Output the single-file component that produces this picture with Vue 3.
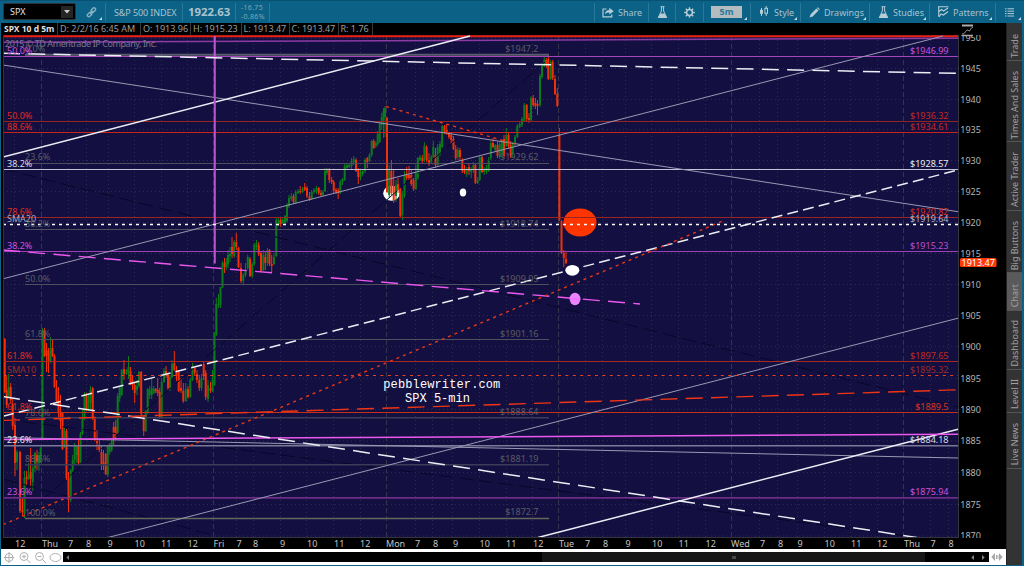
<template>
  <div class="app-window">
    <header class="toolbar">
      <div class="toolbar__symbol">
        <span>SPX</span>
        <span class="toolbar__arrow"><svg width="6" height="4" viewBox="0 0 6 4"><path d="M0 0h6L3 3.6z" fill="#ccc" /></svg></span>
      </div>
      <div class="toolbar__cell toolbar__cell--link toolbar__cell--menu">
        <svg width="11" height="11" viewBox="0 0 11 11" fill="none" stroke="#86b0c2" stroke-width="1.4">
          <rect x="4.7" y="1.6" width="5.2" height="3" rx="1.5" transform="rotate(-45 7.3 3.1)" />
          <rect x="1" y="6" width="5.2" height="3" rx="1.5" transform="rotate(-45 3.6 7.5)" />
          <path d="M4 7l3.2-3.2" />
        </svg>
      </div>
      <div class="toolbar__cell toolbar__cell--name"><span>S&amp;P 500 INDEX</span></div>
      <div class="toolbar__cell toolbar__cell--last"><span>1922.63</span></div>
      <div class="toolbar__cell toolbar__cell--change">
        <span>-16.75</span>
        <span>-0.86%</span>
      </div>
      <div class="toolbar__spacer" />
      <div class="toolbar__cell toolbar__cell--share">
        <svg width="12" height="11" viewBox="0 0 12 11">
          <path d="M4.5 2H1v7.8h8.8V7.5" fill="none" stroke="#b5cdd7" stroke-width="1.2" />
          <path d="M3 7.3C3.2 4.3 4.8 3 7.3 3V.8L11.7 4.3 7.3 7.6V5.4C5.4 5.3 4 5.9 3 7.3z" fill="#b5cdd7" />
        </svg>
        <span>Share</span>
      </div>
      <div class="toolbar__cell toolbar__cell--flask">
        <svg width="11" height="13" viewBox="0 0 11 13"><path :d="flaskOutline" class="flask" /><path :d="flaskFill" fill="#b5cdd7" /></svg>
      </div>
      <div class="toolbar__cell toolbar__cell--gear">
        <svg width="11" height="11" viewBox="-5.5 -5.5 11 11" fill="none" stroke="#b5cdd7">
          <circle r="2.9" stroke-width="1.5" />
          <path d="M0-5.3v2M0 5.3v-2M-5.3 0h2M5.3 0h-2M-3.7-3.7l1.3 1.3M3.7 3.7L2.4 2.4M-3.7 3.7l1.3-1.3M3.7-3.7L2.4-2.4" stroke-width="1.4" />
        </svg>
      </div>
      <div class="toolbar__cell toolbar__cell--interval toolbar__cell--menu"><b>5m</b></div>
      <div class="toolbar__cell toolbar__cell--style toolbar__cell--menu">
        <svg width="10" height="12" viewBox="0 0 10 12" stroke="#b5cdd7">
          <path d="M2.5 2v8" /><rect x="1" y="3.8" width="3" height="4" fill="#b5cdd7" stroke="none" />
          <path d="M7.2 0v2.5M7.2 7.5V10" /><rect x="5.9" y="2.3" width="2.6" height="5" fill="none" />
        </svg>
        <span>Style</span>
      </div>
      <div class="toolbar__cell toolbar__cell--drawings toolbar__cell--menu">
        <svg width="11" height="11" viewBox="0 0 11 11"><path d="M.6 10.4l.9-3L7.4 1.5l2.1 2.1-5.9 5.9zM8 .9l.8-.7L10.8 2.200l-.8.8z" fill="#b5cdd7" /></svg>
        <span>Drawings</span>
      </div>
      <div class="toolbar__cell toolbar__cell--studies toolbar__cell--menu">
        <svg width="11" height="13" viewBox="0 0 11 13"><path :d="flaskOutline" class="flask" /><path :d="flaskFill" fill="#b5cdd7" /></svg>
        <span>Studies</span>
      </div>
      <div class="toolbar__cell toolbar__cell--patterns toolbar__cell--menu">
        <svg width="11" height="12" viewBox="0 0 11 12" fill="none" stroke="#b5cdd7" stroke-width="1.1">
          <path d="M0 .8h10.500M.7 1v9.500M1 5.500l2.500-2 2 1.500 4.500-3M1 11l2-3 2.500 1L10 5.500" />
        </svg>
        <span>Patterns</span>
      </div>
      <div class="toolbar__cell toolbar__cell--list toolbar__cell--menu">
        <svg width="9" height="9" viewBox="0 0 9 9" stroke="#b5cdd7"><path d="M0 .8h1.500M2.500.8H9M0 3.200h1.500M2.500 3.200H9M0 5.600h1.500M2.500 5.600H9M0 8h1.500M2.500 8H9" /></svg>
      </div>
    </header>

    <div class="workspace">
      <main class="panel">
        <div class="quote">
          <b class="quote__cell quote__cell--symbol">SPX 10 d 5m</b>
          <span v-for="q in quote" :key="q.text" class="quote__cell" :style="{ width: q.width + 'px' }">{{ q.text }}</span>
        </div>

        <svg class="chart" width="1003" height="514" viewBox="3 35 1003 514">
          <defs>
            <clipPath id="plot"><rect x="3" y="35" width="955.5" height="503" /></clipPath>
            <clipPath id="axis"><rect x="958" y="23" width="48" height="515" /></clipPath>
          </defs>
          <rect x="3" y="35" width="955.5" height="503" fill="#131041" />
          <g clip-path="url(#plot)">
            <!-- grid -->
            <path v-for="p in prices" :key="'h' + p.y" :d="`M3 ${p.y}H958`" class="grid" />
            <path v-for="x in hourLines" :key="'v' + x" :d="`M${x} 36V538`" class="grid" />
            <path v-for="x in dayLines" :key="'d' + x" :d="`M${x} 36V538`" class="grid grid--day" />

            <ellipse cx="391.500" cy="193.200" rx="8.300" ry="7.500" fill="#fff" />
            <ellipse cx="580" cy="222.500" rx="16.500" ry="14" fill="#ff3500" />

            <!-- candles -->
            <g v-for="(c, i) in candles" :key="'c' + i" :fill="c.up ? '#0a7a1c' : '#f03008'">
              <rect :x="c.x - 0.5" :y="c.high" width="1" :height="c.low - c.high" />
              <rect :x="c.x - 1" :y="c.top" width="2" :height="c.height" />
            </g>

            <!-- studies and trend lines -->
            <line
              v-for="(l, i) in lines"
              :key="'l' + i"
              :x1="l[0]"
              :y1="l[1]"
              :x2="l[2]"
              :y2="l[3]"
              :stroke="l[4]"
              :stroke-width="l[5]"
              :stroke-dasharray="l[6]"
            />

            <ellipse cx="463" cy="192.500" rx="3.200" ry="4" fill="#fff" />
            <ellipse cx="572.300" cy="270.300" rx="7" ry="5.400" fill="#fff" />
            <ellipse cx="575" cy="299" rx="5.400" ry="6.200" fill="#ea84ff" />
            <path d="M569.600 298.600l11 .8" stroke="#ff60ff" />

            <text x="5" y="47" class="label" fill="#77758c" textLength="152">2015 © TD Ameritrade IP Company, Inc.</text>
            <text v-for="(t, i) in leftLabels" :key="'a' + i" :x="t[0]" :y="t[1]" class="label" :fill="t[2]">{{ t[3] }}</text>
            <text v-for="(t, i) in rightLabels" :key="'b' + i" :x="t[0]" :y="t[1]" class="label" :fill="t[2]" text-anchor="end">{{ t[3] }}</text>
            <text x="441.800" y="388" class="signature" textLength="117">pebblewriter.com</text>
            <text x="437.500" y="402" class="signature" textLength="65">SPX 5-min</text>
          </g>

          <path d="M3.500 35V537.500H958.500V35" fill="none" stroke="#34343c" />

          <!-- price axis -->
          <g clip-path="url(#axis)">
            <g v-for="p in prices" :key="'p' + p.y">
              <path :d="`M956 ${p.y}h3`" stroke="#555" />
              <text x="960.300" :y="p.y + 3" class="label" fill="#b4b4b4">{{ p.value }}</text>
            </g>
            <rect x="960" y="258" width="36.500" height="9" rx="1.500" fill="#ff3a08" />
            <text x="961.500" y="265.600" class="label" fill="#fff">1913.47</text>
          </g>

          <!-- time axis -->
          <text v-for="(t, i) in times" :key="'t' + i" :x="t[0]" y="547" class="label" fill="#c4c4c4">{{ t[1] }}</text>
        </svg>
        <svg class="scale-icon" width="13" height="13" viewBox="0 0 13 13" fill="none" stroke="#aaa">
          <path d="M1 1.500h11" stroke-width="2" />
          <path d="M1 11.500h11" stroke-width="1.500" />
          <path d="M1 9.500C3 11 4 8 5.500 6.500S8 8 9 6.500 10 3.500 12 3" />
        </svg>

        <footer class="scroller">
          <svg width="60" height="15" viewBox="0 0 60 15" fill="none" stroke="#b0b0b0">
            <circle cx="6" cy="7.500" r="4" /><path d="M6 2v11M.8 7.500h10.400" />
            <circle cx="21" cy="6.500" r="4" /><path d="M19 6.500h4M21 4.500v4M24 9.500l3.500 3.500" />
            <circle cx="36.500" cy="6.500" r="4" /><path d="M34.500 6.500h4M39.500 9.500l3.500 3.500" />
            <ellipse cx="52.500" cy="7.500" rx="5.500" ry="4" />
          </svg>
          <div class="scroller__track">
            <svg width="3" height="5" viewBox="0 0 3 5"><path d="M3 0v5L.3 2.500z" fill="#777" /></svg>
            <div class="scroller__thumb"><i /></div>
            <svg width="14" height="5" viewBox="0 0 14 5"><path d="M3 0v5L.3 2.500zM11 0v5l2.700-2.500z" fill="#888" /></svg>
          </div>
          <svg width="12" height="8" viewBox="0 0 12 8" fill="#a8a8a8"><path d="M4 0v8L.3 4zM8 0v8l3.700-4zM5 2h1v4H5zM6.500 2h1v4h-1z" /></svg>
        </footer>
      </main>

      <nav class="sidebar">
        <div
          v-for="tab in tabs"
          :key="tab.label"
          class="sidebar__tab"
          :class="{ 'sidebar__tab--active': tab.label === 'Chart' }"
          :style="{ height: tab.height + 'px' }"
        >
          <span>{{ tab.label }}</span>
        </div>
      </nav>
    </div>
  </div>
</template>

<script setup>
const flaskOutline = 'M3.500.7h4M4.400 1v4L1.300 11.500h8.400L6.600 5V1'
const flaskFill = 'M3.500 7.500h4L10 12H1z'

const quote = [
  { text: 'D: 2/2/16 6:45 AM', width: 83 },
  { text: 'O: 1913.96', width: 50 },
  { text: 'H: 1915.23', width: 50.5 },
  { text: 'L: 1913.47', width: 48 },
  { text: 'C: 1913.47', width: 49 },
  { text: 'R: 1.76', width: 34 },
]

const tabs = [
  { label: 'Trade', height: 38 },
  { label: 'Times And Sales', height: 81 },
  { label: 'Active Trader', height: 69 },
  { label: 'Big Buttons', height: 62 },
  { label: 'Chart', height: 37.5 },
  { label: 'Dashboard', height: 59 },
  { label: 'Level II', height: 43 },
  { label: 'Live News', height: 56 },
]

const priceRows = [38, 68.5, 99.5, 129.5, 160.5, 191.5, 222.5, 253.500, 284.500, 315.500, 346.500, 378.500, 409.500, 441, 472.500, 504.500, 536]
const prices = priceRows.map((y, i) => ({ y, value: 1950 - i * 5 }))

const dayLines = [41.5, 213.5, 386.5, 558.5, 731.5, 903.5]
const hourLines = [
  14.5, 68.5, 86.5, 108.5, 134.5, 161.5, 187.5, 236.5, 253.5, 280.5, 306.5, 333.5, 360.5,
  415.5, 432.5, 452.5, 479.5, 506.5, 532.5, 585.5, 602.5, 625.5, 651.5, 678.5, 705.5,
  759.5, 777.5, 797.5, 824.5, 850.5, 877.5, 930.5, 948.5,
]

const times = [
  [15, '12'], [42, 'Thu'], [68, '7'], [86, '8'], [107.5, '9'], [134.5, '10'], [161, '11'], [187.5, '12'],
  [213.5, 'Fri'], [236.5, '7'], [253, '8'], [280, '9'], [307, '10'], [334, '11'], [360, '12'],
  [386, 'Mon'], [415, '7'], [433, '8'], [453, '9'], [479.5, '10'], [506, '11'], [533, '12'],
  [559, 'Tue'], [585, '7'], [603, '8'], [625.5, '9'], [652, '10'], [678.5, '11'], [705.5, '12'],
  [731, 'Wed'], [760, '7'], [778, '8'], [797.5, '9'], [824.5, '10'], [851, '11'], [877, '12'],
  [904, 'Thu'], [930.5, '7'], [948.5, '8'],
]

const red = '#c8241c'
const white = '#ededf5'
const thin = '#9a98b4'
const grey = '#4e4e5e'
const violet = '#a845bc'
const bright = '#ec58ee'
const navy = '#07062a'

// x1, y1, x2, y2, colour, width, dashes
const lines = [
  [25, 515, 545, 62, navy, 1, '14 6'],
  [3, 169, 958, 407, navy, 1, '14 6'],
  [3, 479, 213, 535, navy, 1, '14 6'],
  [3, 419, 915, 537, navy, 1, '14 6'],
  [25, 54.8, 549, 54.8, '#5c5b6c', 2],
  [25, 163.5, 549, 163.5, grey, 1],
  [25, 229.5, 549, 229.5, grey, 1],
  [25, 284.5, 549, 284.5, grey, 1],
  [25, 339.5, 549, 339.5, grey, 1],
  [25, 417.7, 549, 417.7, '#3c3b58', 1.6],
  [25, 464.8, 549, 464.8, '#3c3b58', 1.6],
  [25, 518.5, 549, 518.5, '#66665c', 1.4],
  [3, 36.2, 958, 36.2, '#e8200c', 2],
  [3, 42.3, 958, 38.3, '#8c3aa4', 1.5],
  [3, 56.5, 958, 56.5, violet, 1],
  [3, 121.5, 958, 121.5, '#94241f', 1],
  [3, 132.5, 958, 132.5, red, 1],
  [3, 169.5, 958, 169.5, '#c4c2d4', 1],
  [3, 217.5, 958, 217.5, '#9c2420', 1],
  [3, 251.5, 958, 251.5, '#9c40b4', 1],
  [3, 361.5, 958, 361.5, '#a62820', 1],
  [3, 412.5, 958, 412.5, '#c43018', 1],
  [3, 445.8, 958, 445.8, '#7b7999', 1.6],
  [3, 497.8, 958, 497.8, '#6a2c86', 1.8],
  [3, 437.5, 958, 458, thin, 1],
  [3, 65, 958, 211.7, thin, 1],
  [3, 278.8, 943, 36, thin, 1],
  [108, 537.5, 958, 318.2, thin, 1],
  [3, 157, 470, 36, white, 1.5],
  [538, 537.5, 958, 429.3, white, 1.5],
  [3, 439.4, 958, 434.2, bright, 1.5],
  [214.8, 36, 214.8, 263.5, '#bb54cc', 2],
  [3, 53.3, 958, 73.4, white, 1.5, '17 8.3'],
  [3, 416.3, 958, 170, white, 1.5, '11 5.2'],
  [3, 396.6, 920, 538, white, 1.5, '17 8.3'],
  [3, 420.4, 958, 389.8, '#f03414', 1.4, '17 8.3'],
  [3, 250, 640, 304, bright, 1.4, '17 8.3'],
  [3, 524.5, 725, 220, '#e83818', 1.4, '3 4'],
  [386, 106.5, 515, 144, '#e83818', 1.4, '3 4'],
  [3, 375.5, 958, 375.5, '#e84020', 1, '3 4.4'],
  [3, 224.500, 958, 224.500, '#fff', 1.4, '3 4'],
]

const leftLabels = [
  [25, 51.5, '#5c5b66', '0.0%'],
  [7, 53.5, '#d050dc', '50.0%'],
  [7, 119, '#e02c1c', '50.0%'],
  [7, 130, '#e02c1c', '88.6%'],
  [25, 160.3, '#5c5b66', '23.6%'],
  [7, 166.500, '#dcdce8', '38.2%'],
  [7, 214.500, '#e02c1c', '78.6%'],
  [7, 221.500, '#a8a8bc', 'SMA20'],
  [25, 227.300, '#5c5b66', '38.2%'],
  [7, 249, '#d050dc', '38.2%'],
  [25, 282, '#5c5b66', '50.0%'],
  [25, 337, '#5c5b66', '61.8%'],
  [7, 359, '#e02c1c', '61.8%'],
  [7, 373, '#9c2a28', 'SMA10'],
  [7, 410, '#e02c1c', '61.8%'],
  [25, 415.500, '#5c5b66', '78.6%'],
  [7, 443.300, '#e4e4ec', '23.6%'],
  [25, 462.300, '#5c5b66', '88.6%'],
  [7, 495.300, '#d050dc', '23.6%'],
  [25, 515.500, '#5c5b66', '100.0%'],
]

const rightLabels = [
  [538.5, 52, '#5c5b66', '$1947.2'],
  [538.5, 160.300, '#5c5b66', '$1929.62'],
  [538.5, 227.300, '#5c5b66', '$1918.74'],
  [538.5, 282, '#5c5b66', '$1909.95'],
  [538.5, 337, '#5c5b66', '$1901.16'],
  [538.5, 415.300, '#5c5b66', '$1888.64'],
  [538.5, 462.300, '#5c5b66', '$1881.19'],
  [538.5, 515.300, '#5c5b66', '$1872.7'],
  [948.5, 53.500, '#d050dc', '$1946.99'],
  [948.5, 119, '#c8281c', '$1936.32'],
  [948.5, 130, '#c8281c', '$1934.61'],
  [948.5, 166.500, '#ececf4', '$1928.57'],
  [948.5, 214.500, '#d82c1c', '$1920.82'],
  [948.5, 221.500, '#b4b4c4', '$1919.64'],
  [948.5, 249, '#c04ccc', '$1915.23'],
  [948.5, 359, '#c8281c', '$1897.65'],
  [948.5, 373, '#9c2a28', '$1895.32'],
  [948.5, 409.800, '#dc341c', '$1889.5'],
  [948.5, 443.300, '#dcdce8', '$1884.18'],
  [948.5, 495.300, '#d050dc', '$1875.94'],
]

// x, high, open, close, low
const bars = [
  [4.7, 338, 339, 392, 393], [6.7, 375, 390, 405, 408], [8.7, 374, 396, 387, 398], [10.7, 383, 387, 400, 403], [12.7, 399, 404, 426, 430],
  [15, 418, 425, 463, 476], [17, 450, 462, 452, 470], [20, 451, 452, 511, 513], [22.5, 498, 510, 512, 516], [24.5, 471, 514, 478, 518],
  [26.6, 471, 477, 479, 485], [28.6, 463, 478, 475, 480], [30.6, 448, 472, 479, 487], [32.8, 466, 482, 468, 491], [35, 452, 468, 453, 472],
  [37, 450, 455, 462, 470], [39, 452, 463, 455, 471], [40.7, 447, 462, 448, 463], [42.5, 328, 438, 331, 438], [44.5, 328, 330, 356, 357],
  [46.5, 343, 350, 356, 372], [48.5, 348, 351, 361, 373], [50.500, 337, 361, 348, 363], [52.5, 339, 348, 356, 357], [54.5, 354, 356, 387, 388],
  [56.5, 380, 388, 401, 402], [58.5, 387, 400, 412, 417], [60.5, 395, 412, 421, 429], [62.5, 412, 413, 449, 450], [64.5, 428, 443, 431, 448],
  [66.5, 429, 431, 478, 480], [68.5, 472, 478, 500, 512], [70.700, 469, 500, 470, 502], [72.700, 455, 470, 460, 472], [74.700, 443, 460, 446, 465],
  [76.700, 446, 455, 447, 463], [78.500, 440, 446, 463, 464], [80.500, 432, 462, 434, 463], [82.500, 410, 434, 419, 435], [84.500, 392, 419, 394, 420],
  [86.500, 393, 396, 409, 411], [88.500, 395, 410, 396, 411], [90.500, 386, 403, 390, 409], [92.700, 387, 388, 419, 420], [94.700, 418, 419, 440, 441],
  [97, 430, 441, 443, 450], [99.300, 440, 445, 450, 452], [101.500, 445, 452, 465, 470], [103.500, 450, 462, 464, 470], [105.700, 453, 454, 474, 475],
  [107.700, 445, 475, 446, 477], [109.700, 443, 452, 445, 455], [111.700, 438, 450, 440, 452], [113.700, 422, 427, 438, 445], [115.700, 420, 427, 434, 440],
  [117.700, 393, 433, 396, 435], [119.700, 386, 398, 388, 402], [121.700, 369, 395, 370, 396], [124, 360, 369, 374, 380], [126.500, 369, 374, 370, 375],
  [128.500, 356, 372, 367, 379], [130.500, 367, 371, 384, 385], [132.500, 375, 380, 385, 390], [134.700, 382, 385, 393, 403], [137, 380, 390, 386, 395],
  [139, 371, 386, 372, 388], [141.200, 371, 372, 415, 416], [143.700, 416, 417, 431, 436], [145.700, 410, 431, 411, 432], [147.700, 388, 412, 389, 414],
  [149.700, 386, 395, 390, 399], [151.700, 378, 395, 388, 399], [153.700, 386, 393, 389, 394], [155.700, 388, 389, 391, 393], [157.700, 378, 390, 393, 396],
  [159.700, 388, 392, 418, 419], [161.700, 378, 418, 382, 419], [164, 368, 382, 371, 383], [166, 366, 371, 375, 378], [168, 374, 375, 388, 390],
  [170, 375, 388, 377, 391], [172, 360, 377, 364, 378], [174.300, 351, 363, 370, 371], [176.500, 366, 370, 376, 381], [178.700, 371, 372, 391, 392],
  [181, 378, 388, 391, 393], [183.300, 383, 391, 401, 403], [185.700, 383, 401, 389, 402], [188, 386, 389, 397, 399], [190.300, 378, 397, 380, 398],
  [192.500, 363, 380, 367, 381], [194.700, 367, 368, 373, 376], [197, 370, 374, 380, 383], [199.300, 375, 380, 388, 391], [201.500, 374, 388, 378, 391],
  [203.700, 362, 364, 376, 380], [205.700, 370, 373, 397, 400], [208, 380, 399, 385, 402], [210.500, 382, 388, 391, 393], [212.500, 370, 390, 380, 392],
  [214.500, 332, 385, 335, 386], [216.300, 298, 335, 304, 336], [218.500, 294, 305, 304, 308], [220.500, 287, 305, 287, 308], [222.500, 261, 287, 263, 288],
  [224.500, 258, 263, 267, 273], [226.300, 258, 267, 262, 270], [228, 250, 264, 255, 268], [230, 247, 256, 254, 262], [232, 237, 247, 254, 258],
  [234.200, 240, 256, 242, 258], [236.300, 233, 242, 247, 250], [238.500, 247, 248, 267, 268], [241, 263, 268, 281, 283], [243.300, 273, 281, 275, 285],
  [245.500, 263, 275, 270, 277], [247.700, 255, 268, 257, 270], [250, 257, 259, 276, 277], [252.200, 262, 276, 264, 278], [254.300, 243, 264, 245, 266],
  [256.500, 240, 247, 243, 250], [258.700, 242, 245, 254, 256], [261, 252, 253, 271, 272], [263.300, 250, 270, 255, 271], [265.300, 252, 257, 263, 270],
  [267.500, 248, 263, 250, 266], [269.500, 249, 250, 264, 266], [271.700, 255, 264, 266, 272], [274, 253, 264, 257, 265], [276.300, 217, 256, 220, 257],
  [278.700, 218, 224, 220, 226], [280.700, 218, 220, 224, 227], [282.800, 218, 223, 220, 224], [285, 215, 223, 216, 224], [287, 203, 221, 206, 222],
  [289, 195, 206, 198, 208], [291.300, 193, 199, 196, 201], [293.500, 194, 196, 202, 204], [295.700, 190, 203, 192, 204], [298, 189, 193, 191, 194],
  [300.200, 186, 191, 192, 194], [302.500, 187, 192, 189, 193], [304.700, 183, 187, 190, 191], [307, 186, 188, 196, 198], [309.500, 192, 196, 200, 201],
  [311.700, 190, 199, 192, 200], [314, 188, 192, 190, 194], [316.500, 186, 191, 188, 194], [318.700, 187, 188, 193, 195], [321, 190, 193, 195, 196],
  [323, 190, 195, 192, 196], [325, 168, 191, 171, 192], [327, 168, 173, 169, 175], [329.300, 168, 169, 180, 183], [331.700, 177, 180, 182, 184],
  [333.700, 180, 182, 191, 193], [336, 188, 190, 192, 194], [338.200, 188, 190, 193, 199], [340.300, 180, 193, 182, 194], [342.500, 178, 182, 179, 185],
  [344.700, 164, 180, 166, 181], [347, 164, 168, 165, 170], [349.200, 163, 167, 165, 168], [351.500, 158, 166, 161, 169], [353.700, 156, 162, 159, 165],
  [356, 158, 160, 171, 172], [358.300, 168, 170, 177, 184], [360.500, 170, 177, 173, 180], [362.700, 169, 174, 171, 176], [365, 158, 171, 160, 173],
  [367.300, 157, 158, 162, 168], [369.500, 153, 161, 155, 162], [371.700, 140, 155, 141, 157], [373.700, 139, 141, 148, 149], [375.800, 141, 146, 143, 148],
  [377.700, 131, 144, 134, 146], [379.700, 122, 142, 124, 143], [381.700, 113, 125, 117, 130], [383.500, 108, 120, 111, 138], [385, 106, 117, 108, 137],
  [387, 117, 118, 192, 193], [389.200, 165, 195, 170, 197], [391.400, 160, 171, 193, 195], [393.700, 170, 186, 200, 203], [396, 180, 196, 185, 202],
  [398, 178, 184, 190, 193], [400.300, 188, 189, 216, 217], [402.400, 191, 215, 194, 220], [404.500, 171, 196, 175, 198], [406.700, 167, 174, 178, 180],
  [409, 166, 175, 178, 180], [411.300, 170, 175, 184, 186], [413.600, 178, 180, 189, 191], [415.800, 165, 189, 173, 190], [417.800, 157, 178, 158, 180],
  [420, 155, 160, 157, 161], [422.300, 155, 158, 161, 163], [424.400, 142, 160, 146, 162], [426.600, 145, 147, 160, 162], [429, 153, 160, 163, 166],
  [431.300, 155, 162, 157, 164], [433.300, 141, 157, 147, 158], [435.500, 148, 155, 165, 168], [437.700, 144, 165, 147, 166], [440, 141, 154, 144, 156],
  [442.200, 125, 147, 126, 148], [444.500, 125, 126, 132, 134], [446.700, 124, 130, 133, 135], [449, 132, 133, 137, 139], [451.200, 133, 135, 140, 144],
  [453.500, 136, 139, 149, 150], [455.700, 145, 149, 158, 160], [457.800, 147, 157, 150, 160], [460, 148, 150, 157, 160], [462.300, 158, 160, 171, 173],
  [464.500, 165, 169, 172, 174], [466.700, 167, 174, 169, 177], [469, 163, 167, 171, 175], [471.200, 167, 172, 169, 178], [473.400, 162, 170, 165, 173],
  [475.400, 163, 165, 183, 184], [477.700, 177, 183, 180, 184], [479.700, 156, 180, 157, 181], [482, 156, 157, 172, 173], [484.200, 167, 172, 170, 175],
  [486.500, 165, 172, 168, 174], [488.700, 157, 171, 161, 172], [490.800, 141, 158, 143, 160], [493, 138, 143, 147, 148], [495.200, 144, 150, 145, 152],
  [497.500, 142, 145, 156, 158], [499.700, 141, 157, 144, 159], [501.800, 140, 153, 142, 155], [504, 135, 139, 156, 157], [506.300, 128, 146, 135, 147],
  [508.500, 133, 135, 146, 148], [510.700, 141, 145, 156, 158], [512.700, 142, 154, 144, 157], [515, 135, 144, 137, 146], [517.300, 124, 137, 126, 138],
  [519.700, 122, 127, 124, 128], [522, 117, 125, 119, 127], [524.300, 103, 121, 105, 122], [526.700, 104, 105, 119, 122], [529, 113, 118, 120, 123],
  [531, 96, 120, 98, 121], [533.200, 95, 98, 105, 107], [535.400, 98, 103, 106, 109], [537.500, 100, 104, 106, 115], [540, 74, 105, 76, 107],
  [542, 63, 77, 64, 79], [544.300, 57, 66, 60, 67], [546.300, 58, 60, 64, 68], [548.300, 55, 59, 79, 80], [550.700, 60, 79, 62, 80],
  [552.700, 60, 62, 78, 80], [555, 75, 79, 94, 95], [557.300, 88, 94, 106, 107], [559.400, 128, 135, 220, 221], [561.500, 220, 221, 253, 254],
  [563.800, 250, 253, 258, 267], [566, 252, 259, 263, 264],
]

const candles = bars.map(([x, high, open, close, low]) => ({
  x,
  high,
  low,
  top: Math.min(open, close),
  height: Math.max(1, Math.abs(close - open)),
  up: close < open,
}))
</script>

<style>
body {
  margin: 0;
  background: #0b6186;
  overflow: hidden;
}
</style>

<style scoped>
.app-window {
  width: 1024px;
  height: 566px;
  box-sizing: border-box;
  display: flex;
  flex-direction: column;
  overflow: hidden;
  background: #0b6186;
  font-family: 'Noto Sans', 'Open Sans', sans-serif;
  font-size: 9px;
  line-height: 1;
}

.app-window svg {
  display: block;
  flex: none;
}

.toolbar {
  height: 23px;
  flex: none;
  display: flex;
  align-items: stretch;
  box-sizing: border-box;
  padding-top: 2px;
  color: #a9c3ce;
  background: #0b6186;
  border-top: 1px solid #095172;
}

.toolbar__symbol {
  width: 73px;
  height: 17px;
  margin: 0 0 0 3px;
  box-sizing: border-box;
  padding: 0 2px 0 6px;
  display: flex;
  align-items: center;
  justify-content: space-between;
  color: #e0e0e0;
  background: #000;
  border: 1px solid #2c3438;
  border-radius: 2px;
}

.toolbar__arrow {
  width: 12px;
  height: 12px;
  display: flex;
  align-items: center;
  justify-content: center;
  background: #262626;
}

.toolbar__cell {
  position: relative;
  box-sizing: border-box;
  height: 19px;
  padding-bottom: 1px;
  display: flex;
  align-items: center;
  border-right: 1px solid #2a7898;
  white-space: nowrap;
}

.toolbar__cell--menu::after {
  content: '';
  position: absolute;
  right: 3px;
  bottom: 2px;
  border-style: solid;
  border-width: 0 0 3px 3px;
  border-color: transparent transparent #c8dae2 transparent;
}

.toolbar__cell--link {
  width: 30px;
  padding-left: 10px;
}

.toolbar__cell--name {
  width: 77px;
  padding-left: 8px;
  letter-spacing: -0.1px;
}

.toolbar__cell--last {
  width: 53px;
  padding-left: 5px;
  font-size: 11.4px;
  font-weight: 700;
}

.toolbar__cell--change {
  width: 34px;
  padding-left: 5px;
  flex-direction: column;
  align-items: flex-start;
  justify-content: center;
  gap: 2px;
  font-size: 7px;
  letter-spacing: 0.3px;
  color: #7fa7b8;
}

.toolbar__spacer {
  flex: 1;
  border-right: 1px solid #2a7898;
  margin-bottom: 1px;
}

.toolbar__cell--share {
  width: 54px;
  padding-left: 7px;
  gap: 4px;
}

.toolbar__cell--flask {
  width: 27px;
  padding-left: 8px;
}

.toolbar__cell--gear {
  width: 28px;
  padding-left: 8px;
}

.toolbar__cell--interval {
  width: 47px;
  padding-left: 7px;
}

.toolbar__cell--interval b {
  width: 31px;
  height: 12px;
  line-height: 12px;
  text-align: center;
  color: #2a7898;
  background: #b4bcc0;
}

.toolbar__cell--style {
  width: 50px;
  padding-left: 8px;
  gap: 5px;
}

.toolbar__cell--drawings {
  width: 69px;
  padding-left: 8px;
  gap: 4px;
}

.toolbar__cell--studies {
  width: 60px;
  padding-left: 8px;
  gap: 4px;
}

.toolbar__cell--patterns {
  width: 66px;
  padding-left: 8px;
  gap: 4px;
}

.toolbar__cell--list {
  width: 28px;
  padding-left: 9px;
  border-right: none;
}

.flask {
  fill: none;
  stroke: #b5cdd7;
  stroke-width: 1;
}

.workspace {
  flex: 1;
  display: flex;
  min-height: 0;
  padding: 0 2px 1px 1px;
}

.panel {
  position: relative;
  width: 1005px;
  display: flex;
  flex-direction: column;
  background: #000;
}

.quote {
  height: 12px;
  flex: none;
  display: flex;
  align-items: center;
  padding-left: 2px;
  color: #9c9c9c;
}

.quote__cell {
  box-sizing: border-box;
  height: 12px;
  line-height: 12px;
  padding-left: 2px;
  border-right: 1px solid #3a3a3a;
  white-space: nowrap;
}

.quote__cell--symbol {
  width: 55px;
  padding-left: 1px;
  font-size: 8.5px;
  color: #dedede;
}

.chart {
  margin-left: 2px;
}

.grid {
  stroke: #2c2b4a;
  stroke-width: 1;
  stroke-dasharray: 1 3;
}

.grid--day {
  stroke: #34344a;
  stroke-dasharray: 5 3;
}

.label {
  font-size: 9px;
}

.signature {
  font-family: 'Liberation Mono', monospace;
  font-size: 12px;
  fill: #fff;
  text-anchor: middle;
}

.scale-icon {
  position: absolute;
  left: 960px;
  top: 1px;
}

.scroller {
  flex: 1;
  display: flex;
  align-items: center;
  padding: 0 3px 0 2px;
  background: #fff;
}

.scroller__track {
  width: 928px;
  height: 10px;
  box-sizing: border-box;
  display: flex;
  align-items: center;
  justify-content: space-between;
  padding: 0 4px 0 3px;
  margin-right: 2px;
  background: #000;
}

.scroller__thumb {
  width: 383px;
  height: 10px;
  margin-left: auto;
  margin-right: 46px;
  display: flex;
  align-items: center;
  justify-content: center;
  background: #161616;
}

.scroller__thumb i {
  width: 4px;
  height: 3px;
  background: #484848;
}

.sidebar {
  width: 16px;
  background: #333;
  border-left: 1px solid #222;
  box-sizing: border-box;
}

.sidebar__tab {
  box-sizing: border-box;
  display: flex;
  align-items: center;
  justify-content: center;
  padding-top: 8px;
  border-bottom: 1px solid #555;
  color: #a0a0a0;
  background: #333;
}

.sidebar__tab span {
  writing-mode: vertical-rl;
  transform: rotate(180deg);
  white-space: nowrap;
}

.sidebar__tab--active {
  background: #5a5a5a;
}
</style>
